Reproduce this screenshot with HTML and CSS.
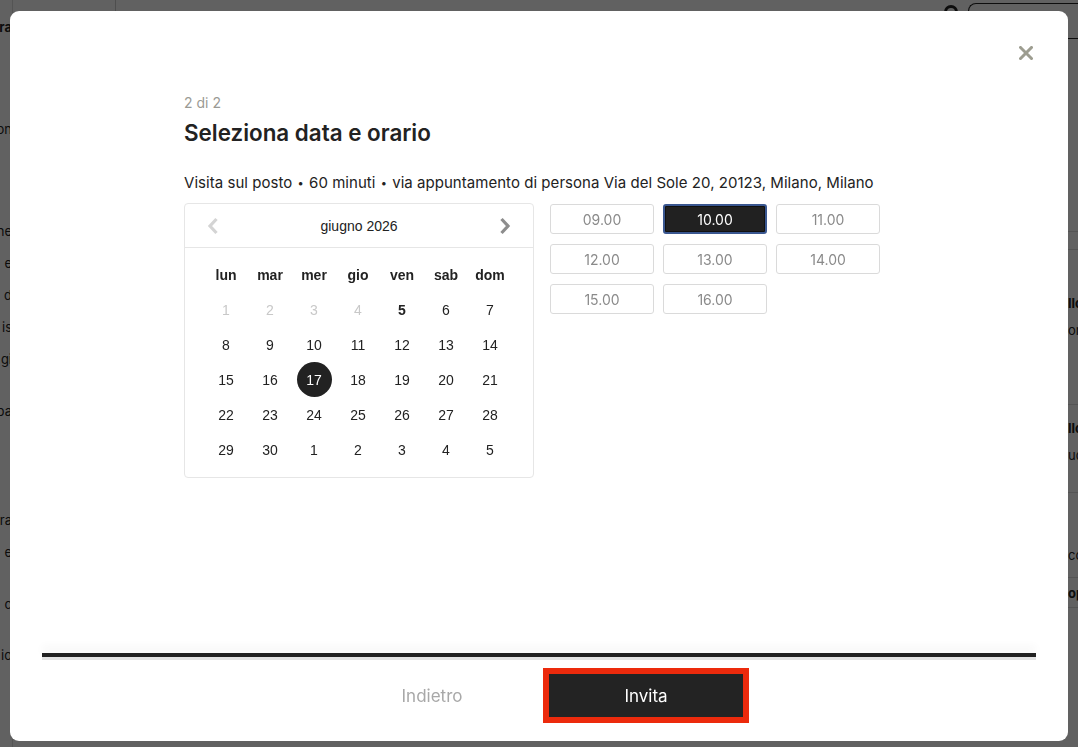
FILE: index.html
```html
<!DOCTYPE html>
<html lang="it">
<head>
<meta charset="utf-8">
<title>Seleziona data e orario</title>
<link rel="stylesheet" href="styles.css">
</head>
<body>
<div class="app">
  <aside class="side">
    <div class="side-item strong">ra</div>
    <div class="side-item gap-l">on</div>
    <div class="side-item gap-l">ne</div>
    <div class="side-item">e</div>
    <div class="side-item">d</div>
    <div class="side-item">is</div>
    <div class="side-item">gi</div>
    <div class="side-item gap-m">pa</div>
    <div class="side-item gap-xl">ra</div>
    <div class="side-item">e</div>
    <div class="side-item gap-m">c</div>
    <div class="side-item gap-s">io</div>
  </aside>
  <div class="app-body">
    <header class="topbar">
      <div class="topbar-brand"></div>
      <div class="topbar-tools">
        <span class="help-dot"></span>
        <div class="search-box"></div>
      </div>
    </header>
    <div class="app-row">
      <main class="main"></main>
      <aside class="panel">
        <div class="panel-card tall"></div>
        <div class="panel-card thin"></div>
        <div class="panel-card"><b>llo</b><span>on</span></div>
        <div class="panel-card mid"><b>llo</b><span>ud</span></div>
        <div class="panel-card low"><span>co</span></div>
        <div class="panel-card short"><b>op</b></div>
      </aside>
    </div>
  </div>
</div>

<div class="overlay">
  <div class="modal">
    <button class="close" type="button" aria-label="Chiudi">
      <svg viewBox="0 0 14 14" width="14" height="14"><path d="M1.5 1.5 L12.5 12.5 M12.5 1.5 L1.5 12.5" stroke="currentColor" stroke-width="3" stroke-linecap="square" fill="none"/></svg>
    </button>

    <div class="content">
      <p class="step">2 di 2</p>
      <h2 class="title">Seleziona data e orario</h2>
      <p class="info">Visita sul posto <span class="dot">•</span> 60 minuti <span class="dot">•</span> via appuntamento di persona Via del Sole 20, 20123, Milano, Milano</p>

      <div class="picker">
        <div class="cal">
          <div class="cal-head">
            <span class="nav nav-off">
              <svg viewBox="0 0 12 18" width="12" height="18"><path d="M9.5 2 L3 9 L9.5 16" stroke="currentColor" stroke-width="3.2" fill="none"/></svg>
            </span>
            <span class="month">giugno 2026</span>
            <span class="nav">
              <svg viewBox="0 0 12 18" width="12" height="18"><path d="M2.5 2 L9 9 L2.5 16" stroke="currentColor" stroke-width="3.2" fill="none"/></svg>
            </span>
          </div>
          <div class="cal-grid">
            <span class="wd">lun</span><span class="wd">mar</span><span class="wd">mer</span><span class="wd">gio</span><span class="wd">ven</span><span class="wd">sab</span><span class="wd">dom</span>
            <span class="d off">1</span><span class="d off">2</span><span class="d off">3</span><span class="d off">4</span><span class="d today">5</span><span class="d">6</span><span class="d">7</span>
            <span class="d">8</span><span class="d">9</span><span class="d">10</span><span class="d">11</span><span class="d">12</span><span class="d">13</span><span class="d">14</span>
            <span class="d">15</span><span class="d">16</span><span class="d sel"><i>17</i></span><span class="d">18</span><span class="d">19</span><span class="d">20</span><span class="d">21</span>
            <span class="d">22</span><span class="d">23</span><span class="d">24</span><span class="d">25</span><span class="d">26</span><span class="d">27</span><span class="d">28</span>
            <span class="d">29</span><span class="d">30</span><span class="d">1</span><span class="d">2</span><span class="d">3</span><span class="d">4</span><span class="d">5</span>
          </div>
        </div>

        <div class="slots">
          <button class="slot" type="button">09.00</button>
          <button class="slot active" type="button">10.00</button>
          <button class="slot" type="button">11.00</button>
          <button class="slot" type="button">12.00</button>
          <button class="slot" type="button">13.00</button>
          <button class="slot" type="button">14.00</button>
          <button class="slot" type="button">15.00</button>
          <button class="slot" type="button">16.00</button>
        </div>
      </div>
    </div>

    <div class="footer">
      <div class="progress"><div class="progress-fill"></div></div>
      <div class="actions">
        <button class="btn back" type="button">Indietro</button>
        <button class="btn invite" type="button">Invita</button>
      </div>
    </div>
  </div>
</div>
</body>
</html>
```

FILE: styles.css
```css
* {
  box-sizing: border-box;
}

html, body {
  margin: 0;
  height: 100%;
}

body {
  font-family: Inter, "Open Sans", sans-serif;
  color: #222;
  background: #fff;
  overflow: hidden;
}

/* ---------- underlying app (dimmed by the overlay) ---------- */
.app {
  display: flex;
  height: 100%;
}

.side {
  width: 12px;
  flex: none;
  display: flex;
  flex-direction: column;
  align-items: flex-end;
  padding-top: 18px;
  font-size: 13px;
  color: #222;
}

.side-item {
  height: 18px;
  line-height: 18px;
  margin-top: 14px;
  white-space: nowrap;
}

.side-item.strong {
  font-weight: 700;
  margin-top: 0;
}

.side-item.gap-s { margin-top: 33px; }
.side-item.gap-m { margin-top: 34px; }
.side-item.gap-l { margin-top: 84px; }
.side-item.gap-xl { margin-top: 91px; }

.app-body {
  flex: 1;
  display: flex;
  flex-direction: column;
  border-left: 1px solid #ddd;
}

.topbar {
  height: 39px;
  display: flex;
  justify-content: space-between;
  align-items: flex-start;
}

.topbar-brand {
  width: 103px;
  height: 30px;
  border-right: 1px solid #ccc;
}

.topbar-tools {
  display: flex;
  align-items: flex-start;
  gap: 10px;
  padding-top: 3px;
}

.help-dot {
  width: 14px;
  height: 14px;
  margin-top: 2px;
  border-radius: 50%;
  border: 3px solid #222;
}

.search-box {
  width: 110px;
  height: 36px;
  border: 1px solid #222;
  border-right: 0;
  border-radius: 8px 0 0 8px;
}

.app-row {
  flex: 1;
  display: flex;
}

.main {
  flex: 1;
}

.panel {
  width: 10px;
  flex: none;
  display: flex;
  flex-direction: column;
  font-size: 13px;
  line-height: 18px;
  white-space: nowrap;
}

.panel-card {
  display: flex;
  flex-direction: column;
  gap: 9px;
  height: 155px;
  padding-top: 44px;
  border-bottom: 1px solid #ddd;
}

.panel-card.tall {
  height: 193px;
  padding: 0;
}

.panel-card.thin {
  height: 18px;
  padding: 0;
}

.panel-card.mid {
  height: 88px;
  padding-top: 14px;
}

.panel-card.low {
  height: 85px;
  padding-top: 53px;
}

.panel-card.short {
  height: 30px;
  padding-top: 6px;
}

/* ---------- overlay + modal ---------- */
.overlay {
  position: fixed;
  inset: 0;
  background: rgba(0, 0, 0, 0.62);
  padding: 11px 10px 6px;
  display: flex;
}

.modal {
  position: relative;
  flex: 1;
  background: #fff;
  border-radius: 9px;
  display: flex;
  flex-direction: column;
}

.close {
  position: absolute;
  top: 35px;
  right: 35px;
  width: 14px;
  height: 14px;
  padding: 0;
  border: 0;
  background: none;
  color: #9d9d90;
  display: flex;
}

.content {
  flex: 1;
  padding: 82px 0 0 174px;
}

.step {
  margin: 0;
  font-size: 14px;
  line-height: 20px;
  color: #9a9a94;
}

.title {
  margin: 6px 0 0;
  font-size: 22.4px;
  line-height: 28px;
  font-weight: 600;
  color: #222;
}

.info {
  margin: 25px 0 0;
  font-size: 15px;
  line-height: 22px;
  letter-spacing: 0.04px;
  color: #222;
}

.info .dot {
  font-size: 11px;
  vertical-align: 1px;
  padding: 0 1px;
}

.picker {
  margin-top: 9px;
  display: flex;
  align-items: flex-start;
  gap: 16px;
}

/* ---------- calendar ---------- */
.cal {
  width: 350px;
  border: 1px solid #e6e6e6;
  border-radius: 4px;
  font-family: "Liberation Sans", Arial, sans-serif;
}

.cal-head {
  height: 44px;
  border-bottom: 1px solid #e6e6e6;
  display: flex;
  align-items: center;
  justify-content: space-between;
  padding: 0 22px;
}

.nav {
  display: flex;
  color: #8d8d8d;
}

.nav-off {
  color: #d4d4d4;
}

.month {
  font-size: 14px;
  color: #222;
}

.cal-grid {
  display: grid;
  grid-template-columns: repeat(7, 44px);
  grid-auto-rows: 35px;
  padding: 9px 0 10px 19px;
}

.cal-grid span {
  display: flex;
  align-items: center;
  justify-content: center;
  font-size: 14px;
  color: #222;
}

.cal-grid .wd {
  font-weight: 700;
}

.cal-grid .off {
  color: #c8c8c8;
}

.cal-grid .today {
  font-weight: 700;
}

.cal-grid .sel i {
  font-style: normal;
  width: 35px;
  height: 35px;
  border-radius: 50%;
  background: #222;
  color: #fff;
  display: flex;
  align-items: center;
  justify-content: center;
}

/* ---------- time slots ---------- */
.slots {
  display: grid;
  grid-template-columns: repeat(3, 104px);
  grid-auto-rows: 30px;
  column-gap: 9px;
  row-gap: 10px;
  margin-top: 1px;
}

.slot {
  font-family: Inter, "Open Sans", sans-serif;
  font-size: 14px;
  color: #8a8a8a;
  background: #fff;
  border: 1px solid #dadada;
  border-radius: 3px;
  padding: 0;
}

.slot.active {
  background: #212121;
  color: #fff;
  border: 2px solid #3a5790;
  box-shadow: inset 0 0 0 1px #111;
}

/* ---------- footer ---------- */
.footer {
  padding-bottom: 18px;
}

.progress {
  margin: 0 32px;
  height: 7px;
  background: #e4e4e4;
  box-shadow: 0 -7px 9px rgba(0, 0, 0, 0.035);
}

.progress-fill {
  height: 4px;
  width: 100%;
  background: #222;
}

.actions {
  margin-top: 8px;
  display: flex;
  justify-content: center;
  gap: 8px;
}

.btn {
  width: 206px;
  height: 55px;
  font-family: Inter, "Open Sans", sans-serif;
  font-size: 17px;
  border: 0;
  padding: 0;
}

.back {
  background: #fff;
  color: #a8a8a8;
}

.invite {
  background: #232323;
  color: #fff;
  border: 6px solid #ec2a0c;
}
```
